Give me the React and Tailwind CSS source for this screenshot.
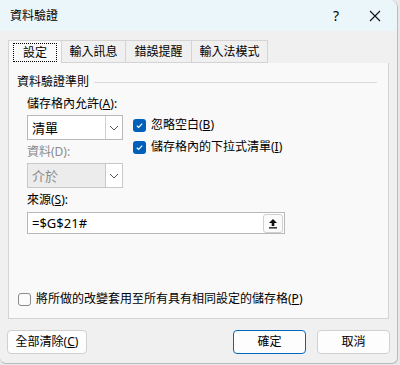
import React from 'react';

const font = { fontFamily: '"Segoe UI", "Noto Sans", "Noto Sans CJK TC", sans-serif' };

const Check = ({ checked }) => (
  <span
    className={`flex h-[13px] w-[13px] shrink-0 items-center justify-center rounded-[3px] ${
      checked ? 'bg-[#005fb8]' : 'border border-[#8a8a8a] bg-[#fbfbfb]'
    }`}
  >
    {checked && (
      <svg width="9" height="9" viewBox="0 0 9 9">
        <path d="M1.8 4.7 L3.6 6.4 L7.2 2.6" fill="none" stroke="white" strokeWidth="1.2" />
      </svg>
    )}
  </span>
);

const Chevron = ({ color }) => (
  <svg width="10" height="6" viewBox="0 0 10 6">
    <path d="M1 1 L5 5 L9 1" fill="none" stroke={color} strokeWidth="1" />
  </svg>
);

const Combo = ({ value, disabled }) => (
  <div
    className={`flex h-[25px] w-[96px] shrink-0 border ${
      disabled ? 'border-[#c8c8c8] bg-[#ececec] text-[#8a8a8a]' : 'border-[#b8b8b8] bg-white text-black'
    }`}
  >
    <div className="flex flex-1 items-center pl-[4px] text-[13px]">{value}</div>
    <div
      className={`flex w-[17px] items-center justify-center border-l bg-white ${
        disabled ? 'border-[#c8c8c8]' : 'border-[#d0d0d0]'
      }`}
    >
      <Chevron color="#555" />
    </div>
  </div>
);

const Button = ({ children, primary, width }) => (
  <button
    className={`flex h-[24px] items-center justify-center rounded-[4px] border bg-[#fdfdfd] text-[12px] leading-[16px] text-black ${
      primary ? 'border-[#0067c0]' : 'border-[#d0d0d0]'
    } ${width}`}
  >
    {children}
  </button>
);

export default function App() {
  const tabs = ['輸入訊息', '錯誤提醒', '輸入法模式'];
  const tabWidths = ['w-[64px]', 'w-[66px]', 'w-[76px]'];
  return (
    <div className="h-[365px] w-[400px] bg-[#e8e8e8]" style={font}>
      <div className="flex h-[364px] w-[398px] flex-col overflow-hidden rounded-tr-[8px] rounded-b-[6px] border-r border-b border-[#bcbcbc] bg-[#f0f0f0] text-[12px] leading-[16px] text-black">
        {/* title bar */}
        <div className="flex h-[31px] shrink-0 items-center bg-[#eaf6fa] pl-[10px]">
          <span className="text-[12px]">資料驗證</span>
          <span className="ml-auto mr-[30px] text-[14px]">?</span>
          <svg width="12" height="12" viewBox="0 0 12 12" className="mr-[16px]">
            <path d="M1 1 L11 11 M11 1 L1 11" stroke="#111" strokeWidth="1.1" />
          </svg>
        </div>

        {/* tabs */}
        <div className="mt-[9px] flex shrink-0 px-[8px]">
          <div className="flex h-[23px] w-[54px] items-center justify-center border border-b-0 border-[#d4d4d4] bg-[#f9f9f9]">
            <span className="border border-dotted border-black px-[9px] leading-[17px]">設定</span>
          </div>
          {tabs.map((t, i) => (
            <div
              key={t}
              className={`flex h-[23px] items-center justify-center border border-l-0 border-[#d4d4d4] bg-[#f0f0f0] ${tabWidths[i]}`}
            >
              {t}
            </div>
          ))}
        </div>

        {/* panel */}
        <div className="mx-[8px] flex h-[256px] shrink-0 flex-col border border-t-0 border-[#d4d4d4] bg-[#f9f9f9] px-[8px]">
          <div className="mt-[11px] flex items-center">
            <span>資料驗證準則</span>
            <div className="ml-[5px] mr-[3px] h-px flex-1 bg-[#dcdcdc]" />
          </div>

          <div className="ml-[10px] mt-[6px] flex flex-col">
            <span>
              儲存格內允許(<u>A</u>):
            </span>
            <div className="mt-[3px] flex h-[25px] items-start">
              <Combo value="清單" />
              <div className="ml-[10px] mt-[2px] flex flex-col gap-[6px]">
                <div className="flex items-center gap-[5px]">
                  <Check checked />
                  <span>
                    忽略空白(<u>B</u>)
                  </span>
                </div>
                <div className="flex items-center gap-[5px]">
                  <Check checked />
                  <span>
                    儲存格內的下拉式清單(<u>I</u>)
                  </span>
                </div>
              </div>
            </div>
            <span className="mt-[4px] text-[#8a8a8a]">資料(D):</span>
            <div className="mt-[3px]">
              <Combo value="介於" disabled />
            </div>
            <span className="mt-[4px]">
              來源(<u>S</u>):
            </span>
            <div className="mt-[4px] flex h-[22px] w-[258px] items-center border border-[#b8b8b8] bg-white pl-[4px] pr-px">
              <span className="flex-1 text-[13px]">=$G$21#</span>
              <div className="flex h-[19px] w-[20px] items-center justify-center rounded-[3px] border border-[#cfcfcf] bg-[#fbfbfb]">
                <svg width="10" height="11" viewBox="0 0 10 11">
                  <path d="M5 1 L9 5 H6.3 V8 H3.7 V5 H1 Z" fill="#111" />
                  <rect x="1" y="9.2" width="8" height="1.3" fill="#111" />
                </svg>
              </div>
            </div>
          </div>

          <div className="mt-[57px] flex items-center gap-[5px] pl-px">
            <Check />
            <span>
              將所做的改變套用至所有具有相同設定的儲存格(<u>P</u>)
            </span>
          </div>
        </div>

        {/* buttons */}
        <div className="mt-[11px] flex px-[7px]">
          <Button width="w-[80px]">
            全部清除(<u>C</u>)
          </Button>
          <div className="ml-auto flex gap-[11px]">
            <Button primary width="w-[73px]">
              確定
            </Button>
            <Button width="w-[73px]">取消</Button>
          </div>
        </div>
      </div>
    </div>
  );
}
